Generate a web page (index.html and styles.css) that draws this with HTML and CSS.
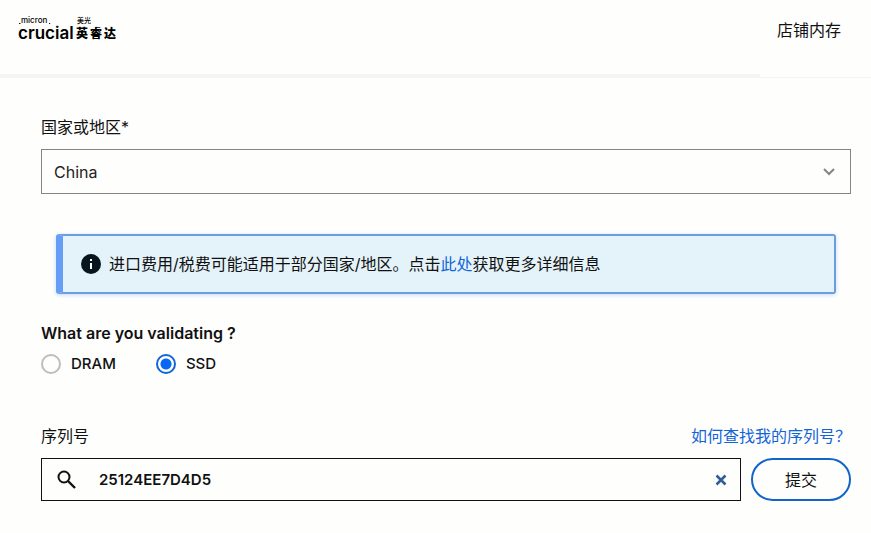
FILE: index.html
```html
<!DOCTYPE html>
<html lang="zh-CN">
  <head>
    <meta charset="utf-8">
    <title>Crucial 英睿达</title>
    <link rel="stylesheet" href="styles.css">
  </head>
  <body>
    <header class="header">
      <a class="logo" href="#" aria-label="Crucial 英睿达">
        <svg width="104" height="28" viewBox="0 0 104 28">
          <text class="logo-micron" x="3" y="8">micron</text>
          <path d="M1 8.500h1.500M31 8.500h1.200" stroke="#111" stroke-width="1.200" />
          <text class="logo-cn-small" x="59" y="8">美光</text>
          <text class="logo-crucial" x="0" y="24">crucial</text>
          <text class="logo-cn" x="58" y="23">英</text>
          <text class="logo-cn" x="72" y="23">睿</text>
          <text class="logo-cn" x="86" y="23">达</text>
        </svg>
      </a>
      <a class="nav-link" href="#">店铺内存</a>
    </header>
    <div class="rule"></div>

    <main class="content">
      <form>
        <label class="label" for="country">国家或地区*</label>
        <div class="select-wrap">
          <select class="select" id="country">
            <option>China</option>
          </select>
          <svg class="chevron" width="12" height="8" viewBox="0 0 12 8" fill="none" stroke="#858585" stroke-width="2">
            <path d="M1 1l5 5 5-5" />
          </svg>
        </div>

        <div class="notice">
          <svg width="20" height="20" viewBox="0 0 20 20">
            <circle cx="10" cy="10" r="10" fill="#07151c" />
            <path d="M9 5h2v2H9zM9 9h2v6H9z" fill="#fff" />
          </svg>
          <p>进口费用/税费可能适用于部分国家/地区。点击<a href="#">此处</a>获取更多详细信息</p>
        </div>

        <fieldset class="types">
          <legend>What are you validating ?</legend>
          <div class="radios">
            <label class="radio"><input type="radio" name="type">DRAM</label>
            <label class="radio"><input type="radio" name="type" checked>SSD</label>
          </div>
        </fieldset>

        <div class="serial-head">
          <label for="serial">序列号</label>
          <a href="#">如何查找我的序列号？</a>
        </div>
        <div class="serial-row">
          <div class="search">
            <svg width="20" height="20" viewBox="0 0 20 20" fill="none" stroke="#111" stroke-width="2">
              <circle cx="7" cy="7" r="5.500" />
              <path d="M11 11l7 7" stroke-width="2.400" />
            </svg>
            <input type="text" id="serial" value="25124EE7D4D5">
            <button class="clear" type="button" aria-label="清除">
              <svg width="12" height="12" viewBox="0 0 12 12" stroke="#315d9b" stroke-width="2.600">
                <path d="M1.500 1.500l9 9M10.500 1.500l-9 9" />
              </svg>
            </button>
          </div>
          <button class="submit" type="submit">提交</button>
        </div>
      </form>
    </main>
  </body>
</html>
```
FILE: styles.css
```css
* {
  box-sizing: border-box;
}

body {
  margin: 0;
  background: #fefefd;
  color: #111;
  font-family: Inter, "Noto Sans CJK SC", sans-serif;
  font-size: 16px;
  line-height: 24px;
}

a {
  color: #1265d8;
  text-decoration: none;
}

.header {
  display: flex;
  justify-content: space-between;
  align-items: flex-start;
  height: 74px;
  padding: 15px 30px 0 18px;
}

.logo svg {
  display: block;
}

.logo-micron {
  font-size: 8px;
  font-weight: 500;
}

.logo-cn-small {
  font-size: 7px;
  font-weight: 500;
}

.logo-crucial {
  font-size: 17px;
  font-weight: 600;
}

.logo-cn {
  font-size: 12px;
  font-weight: 900;
}

.header .nav-link {
  margin-top: 3px;
  color: #111;
}

.rule {
  display: flex;
  height: 4px;
}

.rule::before {
  content: "";
  flex: 1;
  background: #f5f5f5;
}

.rule::after {
  content: "";
  width: 111px;
  border-bottom: 1px solid #f5f5f5;
}

.content {
  padding: 37px 20px 32px 41px;
}

.label {
  display: block;
  margin-bottom: 10px;
}

.select-wrap {
  display: grid;
  align-items: center;
}

.select,
.chevron {
  grid-area: 1 / 1;
}

.select {
  appearance: none;
  width: 100%;
  height: 45px;
  padding: 0 12px;
  border: 1px solid #858585;
  border-radius: 0;
  background: transparent;
  color: #222;
  font: inherit;
}

.chevron {
  justify-self: end;
  margin-right: 16px;
  pointer-events: none;
}

.notice {
  display: flex;
  align-items: center;
  gap: 8px;
  height: 60px;
  margin: 40px 15px 27px;
  padding-left: 18px;
  border: 2px solid #6b9de4;
  border-left: 7px solid #669df6;
  border-radius: 3px;
  background: #e4f3f9;
  box-shadow: 0 1px 4px #c5d8f2;
}

.notice p {
  margin: 0;
}

.types {
  margin: 0 0 48px;
  padding: 0;
  border: 0;
}

.types legend {
  padding: 0;
  font-weight: 600;
}

.radios {
  display: flex;
  gap: 40px;
  margin-top: 7px;
}

.radio {
  display: flex;
  align-items: center;
  gap: 10px;
  font-size: 15px;
  font-weight: 500;
}

.radio input {
  appearance: none;
  width: 20px;
  height: 20px;
  margin: 0;
  border: 2px solid #bdbdbd;
  border-radius: 50%;
}

.radio input:checked {
  border-color: #1265d8;
  background: radial-gradient(circle, #0868f5 5px, transparent 6px);
}

.serial-head {
  display: flex;
  justify-content: space-between;
  margin-bottom: 10px;
}

.serial-row {
  display: flex;
  gap: 10px;
}

.search {
  display: flex;
  flex: 1;
  align-items: center;
  height: 43px;
  padding: 0 13px 0 15px;
  border: 1px solid #111;
}

.search input {
  flex: 1;
  min-width: 0;
  padding: 0 0 0 22px;
  border: 0;
  outline: 0;
  background: transparent;
  color: #111;
  font: inherit;
  font-size: 15px;
  font-weight: 600;
}

.clear {
  display: flex;
  padding: 0;
  border: 0;
  background: none;
}

.submit {
  width: 100px;
  height: 43px;
  border: 2px solid #1265c8;
  border-radius: 22px;
  background: transparent;
  color: #111;
  font: inherit;
}
```
